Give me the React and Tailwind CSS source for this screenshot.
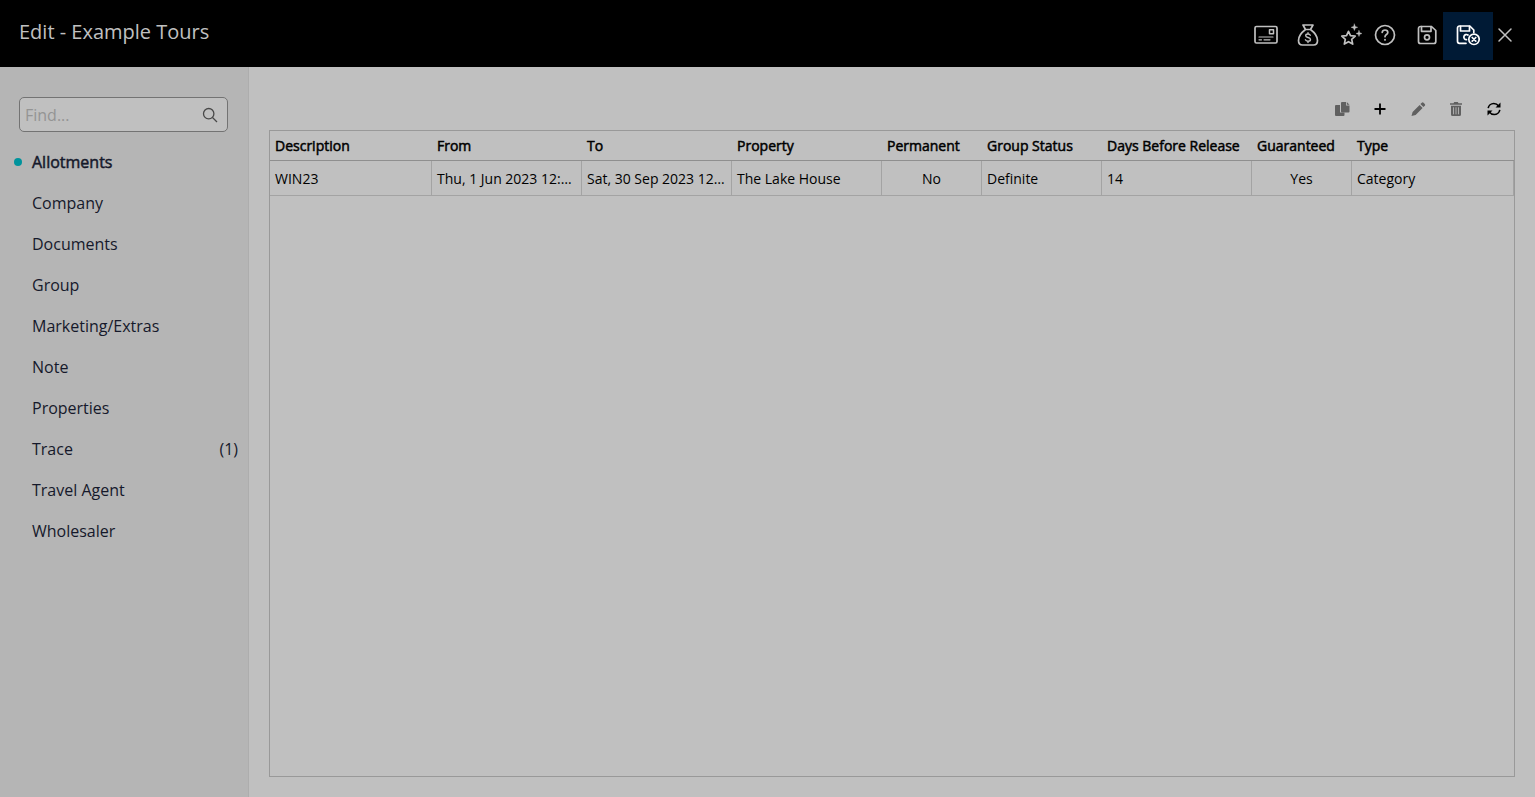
import React from 'react';
import clsx from 'clsx';

const menuItems = [
  { label: 'Allotments', active: true },
  { label: 'Company' },
  { label: 'Documents' },
  { label: 'Group' },
  { label: 'Marketing/Extras' },
  { label: 'Note' },
  { label: 'Properties' },
  { label: 'Trace', count: 1 },
  { label: 'Travel Agent' },
  { label: 'Wholesaler' },
];

const columns = [
  { key: 'description', title: 'Description', width: 'w-[162px]' },
  { key: 'from', title: 'From', width: 'w-[150px]' },
  { key: 'to', title: 'To', width: 'w-[150px]' },
  { key: 'property', title: 'Property', width: 'w-[150px]' },
  { key: 'permanent', title: 'Permanent', width: 'w-[100px]', center: true },
  { key: 'groupStatus', title: 'Group Status', width: 'w-[120px]' },
  { key: 'release', title: 'Days Before Release', width: 'w-[150px]' },
  { key: 'guaranteed', title: 'Guaranteed', width: 'w-[100px]', center: true },
  { key: 'type', title: 'Type', width: '' },
];

const rows = [
  {
    description: 'WIN23',
    from: 'Thu, 1 Jun 2023 12:00',
    to: 'Sat, 30 Sep 2023 12:00',
    property: 'The Lake House',
    permanent: 'No',
    groupStatus: 'Definite',
    release: '14',
    guaranteed: 'Yes',
    type: 'Category',
  },
];

function LineIcon({ children, className = 'size-6', width = 1.7 }) {
  return (
    <svg
      viewBox="0 0 24 24"
      className={className}
      fill="none"
      stroke="currentColor"
      strokeWidth={width}
      strokeLinecap="round"
      strokeLinejoin="round"
      aria-hidden="true"
    >
      {children}
    </svg>
  );
}

const CardIcon = () => (
  <LineIcon>
    <rect x="1" y="3.5" width="22" height="16.500" rx="1.5" />
    <rect x="15.5" y="6.800" width="4" height="4" strokeWidth="1.5" />
    <path d="M5 14h14M5 16.800h2.5M10 16.800h6" strokeWidth="1.2" />
  </LineIcon>
);

const MoneyBagIcon = () => (
  <LineIcon>
    <path d="M7 2h10l-2.5 4.500h-5zM9.500 6.500C5.500 9.500 2.500 13.500 2.500 17.500c0 3 1.500 4.500 4 4.500h11c2.500 0 4-1.500 4-4.500 0-4-3-8-7-11" />
    <path d="M14.300 12.200c-.4-.8-1.200-1.200-2.300-1.200-1.300 0-2.300.6-2.300 1.700 0 2.400 4.800 1.200 4.800 3.700 0 1.100-1.100 1.800-2.500 1.800-1.200 0-2.200-.5-2.600-1.400M12 9.800V11M12 18.200v1.300" strokeWidth="1.4" />
  </LineIcon>
);

const StarsIcon = () => (
  <LineIcon>
    <path d="M10.500 8.300l2 4.300 4.700.5-3.500 3.200 1 4.800-4.200-2.400-4.200 2.400 1-4.800-3.500-3.200 4.700-.5z" />
    <path
      d="M16.400 1l.9 2.400 2.400.9-2.400.9-.9 2.400-.9-2.400-2.400-.9 2.400-.9zM21 7.500l.8 2.200 2.200.8-2.200.8-.8 2.200-.8-2.200-2.200-.8 2.200-.8z"
      fill="currentColor"
      strokeWidth="0.400"
    />
  </LineIcon>
);

const HelpIcon = () => (
  <LineIcon>
    <circle cx="12" cy="12" r="9.500" />
    <path d="M9.200 9.300C9.400 7.800 10.500 7 12 7c1.700 0 2.800 1 2.800 2.400 0 2-2.800 2.200-2.800 4.300" />
    <path d="M12 16.600v.3" strokeWidth="1.8" />
  </LineIcon>
);

const SaveIcon = () => (
  <LineIcon>
    <path d="M5.500 3.500h11l4.300 4v11a2 2 0 0 1-2 2H5.500a2 2 0 0 1-2-2v-13a2 2 0 0 1 2-2z" />
    <path d="M6.500 3.700v4.600h9.500V3.700" />
    <circle cx="12" cy="14.300" r="2.500" />
  </LineIcon>
);

const SaveCloseIcon = () => (
  <LineIcon>
    <path d="M10 20.300H3.500a2 2 0 0 1-2-2V5a2 2 0 0 1 2-2h10.300l4 4v2.500" />
    <path d="M4.500 3.300v4.700h9V3.300" />
    <path d="M12 12a2.600 2.600 0 1 0-1.500 4.700" />
    <circle cx="18" cy="16.300" r="5.200" />
    <path d="M16.200 14.500l3.600 3.600M19.800 14.500l-3.600 3.600" />
  </LineIcon>
);

const CloseIcon = () => (
  <LineIcon width={1.5}>
    <path d="M6 6l12 12M18 6L6 18" />
  </LineIcon>
);

const CopyIcon = () => (
  <svg viewBox="0 0 16 16" className="size-4" fill="currentColor" aria-hidden="true">
    <path d="M2 4h4v7.500h4.500V14a1 1 0 0 1-1 1H2a1 1 0 0 1-1-1V5a1 1 0 0 1 1-1z" />
    <path d="M8 1h4v3.500h3.500V10.500a1 1 0 0 1-1 1H8a1 1 0 0 1-1-1V2a1 1 0 0 1 1-1z" />
    <path d="M12.800 1l2.700 2.700h-2.700z" />
  </svg>
);

const PlusIcon = () => (
  <svg viewBox="0 0 16 16" className="size-4" fill="none" stroke="currentColor" strokeWidth="1.800" aria-hidden="true">
    <path d="M8 2.500v11M2.500 8h11" />
  </svg>
);

const PencilIcon = () => (
  <svg viewBox="0 0 16 16" className="size-4" fill="currentColor" aria-hidden="true">
    <path d="M11.800 1.700a1.300 1.300 0 0 1 1.800 0l1.200 1.200a1.300 1.300 0 0 1 0 1.800l-1.400 1.400-3-3zM9.600 3.900l3 3-7 7L1.500 15l1.100-4.100z" />
  </svg>
);

const TrashIcon = () => (
  <svg viewBox="0 0 16 16" className="size-4" aria-hidden="true">
    <path d="M2 2.300h3.500L6.200 1.100h3.600l.7 1.200H14V3.800H2zM3 4.800h10V13.500a1.500 1.500 0 0 1-1.500 1.500h-7A1.500 1.500 0 0 1 3 13.500z" fill="currentColor" />
    <path d="M5.500 6.300v7M8 6.300v7M10.500 6.300v7" stroke="#c0c0c0" strokeWidth="0.800" />
  </svg>
);

const RefreshIcon = () => (
  <svg viewBox="0 0 16 16" className="size-4" aria-hidden="true">
    <path d="M2.200 7.200C2.600 4.500 5 2.500 7.800 2.500c2 0 3.700.9 4.700 2.400M13.800 8.800c-.4 2.700-2.800 4.700-5.600 4.700-2 0-3.700-.9-4.700-2.400" fill="none" stroke="currentColor" strokeWidth="1.600" />
    <path d="M14.500 1.500v5H9.500zM1.500 14.500V9.500h5z" fill="currentColor" />
  </svg>
);

const headerActions = [
  { label: 'Card', icon: CardIcon, className: 'w-[42px]' },
  { label: 'Rates', icon: MoneyBagIcon, className: 'w-[42px]' },
  { label: 'Favourites', icon: StarsIcon, className: 'w-[42px]' },
  { label: 'Help', icon: HelpIcon, className: 'mr-3 w-7' },
  { label: 'Save', icon: SaveIcon, className: 'w-8' },
  { label: 'Save and close', icon: SaveCloseIcon, className: 'w-[50px] bg-[#001a35] text-white' },
  { label: 'Close', icon: CloseIcon, className: 'w-6' },
];

const gridActions = [
  { label: 'Copy', icon: CopyIcon, disabled: true },
  { label: 'Add', icon: PlusIcon },
  { label: 'Edit', icon: PencilIcon, disabled: true },
  { label: 'Delete', icon: TrashIcon, disabled: true },
  { label: 'Refresh', icon: RefreshIcon },
];

function Header() {
  return (
    <header className="flex h-[67px] items-start justify-between bg-black pr-[18px] pl-[19px] text-[#c0c0c0]">
      <h1 className="pt-[18px] text-xl leading-7">Edit - Example Tours</h1>
      <div className="flex pt-3">
        {headerActions.map(({ label, icon: Icon, className }) => (
          <button
            key={label}
            type="button"
            aria-label={label}
            className={clsx('flex h-12 items-center justify-center pb-[2px]', className)}
          >
            <Icon />
          </button>
        ))}
      </div>
    </header>
  );
}

function Sidebar() {
  return (
    <aside className="w-[249px] shrink-0 border-r border-[#adadad] bg-[#b5b5b5] pt-[30px]">
      <label className="mr-5 ml-[19px] flex h-[35px] items-center rounded-[5px] border border-[#737373] bg-[#c0c0c0] pr-[9px] pl-[5px]">
        <input
          type="text"
          aria-label="Find"
          placeholder="Find..."
          className="min-w-0 flex-1 bg-transparent text-base outline-none placeholder:text-[#949494]"
        />
        <svg viewBox="0 0 16 16" className="size-4 text-[#484848]" fill="none" stroke="currentColor" strokeWidth="1.300" aria-hidden="true">
          <circle cx="6.700" cy="6.700" r="5.200" />
          <path d="M10.500 10.500l4.500 4.500" />
        </svg>
      </label>
      <nav className="mt-[9px]">
        <ul>
          {menuItems.map((item) => (
            <li key={item.label}>
              <a
                href="#"
                className={clsx(
                  'flex h-[41px] items-center pr-[10px] pl-[14px] text-base text-[#15192b]',
                  item.active && '[-webkit-text-stroke:0.5px]'
                )}
              >
                <span className={clsx('mr-[10px] size-2 rounded-full', item.active && 'bg-[#00939c]')} />
                <span className="flex-1">{item.label}</span>
                {item.count && <span>({item.count})</span>}
              </a>
            </li>
          ))}
        </ul>
      </nav>
    </aside>
  );
}

function AllotmentsGrid() {
  return (
    <div className="flex-1 border border-[#999999]">
      <table className="w-full table-fixed border-separate border-spacing-0 text-sm text-black">
        <thead>
          <tr className="h-[30px]">
            {columns.map((col) => (
              <th
                key={col.key}
                className={clsx(
                  'border-b border-[#8f8f8f] px-[5px] text-left font-normal whitespace-nowrap [-webkit-text-stroke:0.5px]',
                  col.width
                )}
              >
                {col.title}
              </th>
            ))}
          </tr>
        </thead>
        <tbody>
          {rows.map((row) => (
            <tr key={row.description} className="h-[35px]">
              {columns.map((col) => (
                <td
                  key={col.key}
                  className={clsx(
                    'truncate border-r border-b border-[#a3a3a3] px-[5px] pt-[2px]',
                    col.center && 'text-center'
                  )}
                >
                  {row[col.key]}
                </td>
              ))}
            </tr>
          ))}
        </tbody>
      </table>
    </div>
  );
}

export default function App() {
  return (
    <div className="flex min-h-screen flex-col bg-[#c0c0c0] font-['Open_Sans','Noto_Sans',sans-serif]">
      <Header />
      <div className="flex flex-1">
        <Sidebar />
        <main className="flex min-w-0 flex-1 flex-col px-5 pt-[26px] pb-5">
          <div className="mb-[5px] flex justify-end pr-[2px]">
            {gridActions.map(({ label, icon: Icon, disabled }) => (
              <button
                key={label}
                type="button"
                aria-label={label}
                disabled={disabled}
                className={clsx(
                  'flex h-8 w-[38px] items-center justify-center',
                  disabled ? 'text-[#606060]' : 'text-black'
                )}
              >
                <Icon />
              </button>
            ))}
          </div>
          <AllotmentsGrid />
        </main>
      </div>
    </div>
  );
}
